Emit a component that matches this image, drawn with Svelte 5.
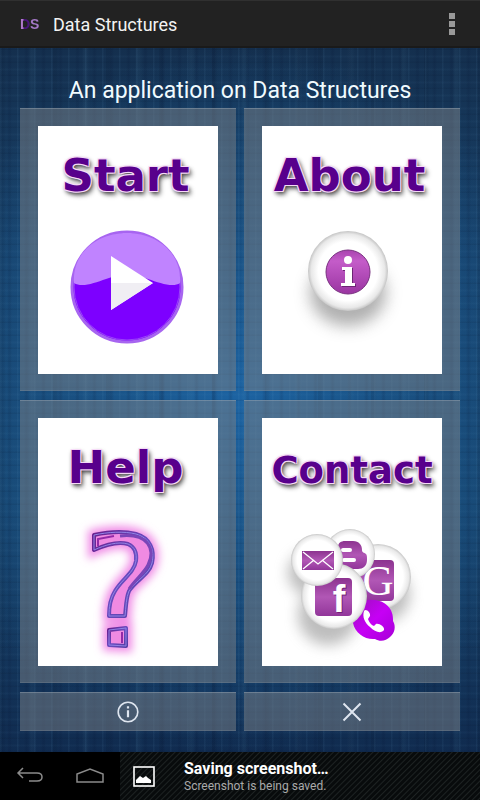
<script>
  const tiles = [
    { id: 'start', label: 'Start' },
    { id: 'about', label: 'About' },
    { id: 'help', label: 'Help' },
    { id: 'contact', label: 'Contact', small: true }
  ];
</script>

<div class="app">
  <header>
    <span class="logo">DS</span>
    <h1>Data Structures</h1>
    <button class="menu" aria-label="More options"><i></i><i></i><i></i></button>
  </header>

  <main>
    <p class="subtitle">An application on Data Structures</p>
    <div class="grid">
      {#each tiles as tile (tile.id)}
        <button class="tile">
          <span class="card">
            <span class="word" class:small={tile.small}>{tile.label}</span>
            {#if tile.id === 'start'}
              <svg class="art" viewBox="0 0 180 148" aria-hidden="true">
                <circle cx="89" cy="61" r="55" fill="#7d00ff" stroke="#a765f0" stroke-width="3" />
                <circle cx="89" cy="61" r="53" fill="none" stroke="#9a45f8" stroke-width="1" />
                <path d="M36 57C34 27 59 7 89 7s55 20 53 50c-7 5-20 0-32-4-14-5-28-5-42 0-12 4-24 9-32 4z" fill="#c083ff" />
                <path d="M73 30l42 27-42 27z" fill="#fff" />
                <path d="M73 57h42L73 84z" fill="#f0eef3" />
              </svg>
            {:else if tile.id === 'about'}
              <svg class="art" viewBox="0 0 180 148" aria-hidden="true">
                <defs>
                  <radialGradient id="a-ball"><stop offset=".74" stop-color="#fff" /><stop offset=".92" stop-color="#e8e8e8" /><stop offset="1" stop-color="#c4c4c4" /></radialGradient>
                  <linearGradient id="a-disc" x2="0" y2="1"><stop stop-color="#a844ae" /><stop offset=".25" stop-color="#c45cc9" /><stop offset="1" stop-color="#9a35a1" /></linearGradient>
                  <filter id="a-blur" x="-50%" y="-50%" width="200%" height="200%"><feGaussianBlur stdDeviation="8" /></filter>
                </defs>
                <ellipse cx="86" cy="67" rx="38" ry="33" fill="#8e8e8e" opacity=".7" filter="url(#a-blur)" />
                <circle cx="86" cy="45" r="40" fill="url(#a-ball)" />
                <circle cx="86" cy="46" r="22" fill="url(#a-disc)" stroke="#793080" />
                <path d="M80 41h10v16h3v3H79v-3h4V44h-3z" transform="translate(1 1)" fill="#6c2473" />
                <circle cx="86" cy="34" r="4" fill="#fff" />
                <path d="M80 41h10v16h3v3H79v-3h4V44h-3z" fill="#fff" />
              </svg>
            {:else if tile.id === 'help'}
              <svg class="art" viewBox="0 0 180 148" aria-hidden="true">
                <defs>
                  <filter id="h-blur" x="-40%" y="-40%" width="180%" height="180%"><feGaussianBlur stdDeviation="4" /></filter>
                  <linearGradient id="h-edge" x2="1" y2="1"><stop stop-color="#68208e" /><stop offset=".5" stop-color="#6a4cc0" /><stop offset="1" stop-color="#563da4" /></linearGradient>
                  <path id="h-mark" d="M56 17c14-3 30-4 42-1 14 4 19 16 16 29-3 12-16 17-23 28-3 7-3 16-4 25H71c0-9 1-17 6-25 7-12 19-18 21-30 1-8-1-14-8-17-10-3-23 1-34 6z" />
                  <path id="h-dot" d="M71 112l17-2v18l-17-1z" />
                </defs>
                <g filter="url(#h-blur)" fill="#f39bea" stroke="#f08ce6" stroke-width="12">
                  <use href="#h-mark" /><use href="#h-dot" />
                </g>
                <g fill="#f08ae2" stroke="url(#h-edge)" stroke-width="4" stroke-linejoin="round">
                  <use href="#h-mark" /><use href="#h-dot" />
                </g>
                <g fill="none" stroke="#9184e6" stroke-width="1" stroke-linejoin="round">
                  <use href="#h-mark" /><use href="#h-dot" />
                </g>
                <path d="M82 18c28-3 36 13 28 29-4 8-13 15-19 24" fill="none" stroke="#7a45b8" stroke-width="3" />
                <path d="M60 28v-7l16-3M84 114v11" fill="none" stroke="#932aa8" stroke-width="2" />
              </svg>
            {:else}
              <svg class="art" viewBox="0 0 180 148" aria-hidden="true">
                <defs>
                  <radialGradient id="c-ball"><stop offset=".76" stop-color="#fff" /><stop offset=".93" stop-color="#e9e9e9" /><stop offset="1" stop-color="#c6c6c6" /></radialGradient>
                  <linearGradient id="c-fill" x2="0" y2="1"><stop stop-color="#8c338f" /><stop offset=".5" stop-color="#b157b5" /><stop offset="1" stop-color="#92369a" /></linearGradient>
                  <linearGradient id="c-phone" x2="1" y2="1"><stop stop-color="#9b10bb" /><stop offset=".5" stop-color="#c600f5" /><stop offset="1" stop-color="#a600d6" /></linearGradient>
                  <filter id="c-blur" x="-50%" y="-50%" width="200%" height="200%"><feGaussianBlur stdDeviation="7" /></filter>
                </defs>
                <g fill="#888" opacity=".55" filter="url(#c-blur)">
                  <circle cx="66" cy="97" r="30" /><circle cx="119" cy="76" r="29" /><circle cx="48" cy="55" r="22" />
                </g>
                <circle cx="116" cy="59" r="33" fill="url(#c-ball)" />
                <rect x="94" y="42" width="38" height="41" rx="4" fill="url(#c-fill)" />
                <text x="116" y="77" class="glyph google" fill="#fff">G</text>
                <circle cx="88" cy="36" r="25" fill="url(#c-ball)" />
                <path d="M76 29c0-4 3-6 7-6h8c6 0 9 4 9 9 0 3 2 2 4 4 1 1 1 3 1 6 0 6-4 9-9 9H82c-4 0-6-2-6-6z" fill="url(#c-fill)" />
                <path d="M81 32h7M82 42h10" stroke="#fff" stroke-width="4" stroke-linecap="round" />
                <path d="M97 87c3-4 8-6 14-5 12 0 21 9 20 21 3 5 2 12-3 16-4 4-10 5-15 2-10 1-20-6-22-16-1-7 1-14 6-18z" fill="url(#c-phone)" />
                <path d="M102 93c-2 6 1 12 6 16 5 5 11 7 14 3 1-3-5-7-8-6l-2 2c-3-1-5-4-6-7l2-3c1-3-4-8-6-5z" fill="#fff" />
                <circle cx="72" cy="78" r="33" fill="url(#c-ball)" />
                <rect x="53" y="60" width="37" height="38" rx="4" fill="url(#c-fill)" />
                <text x="78" y="95" class="glyph face" fill="#712276">f</text>
                <text x="77" y="94" class="glyph face" fill="#fff">f</text>
                <circle cx="55" cy="42" r="26" fill="url(#c-ball)" />
                <rect x="40" y="33" width="32" height="19" fill="url(#c-fill)" />
                <path d="M41 34l15 12 15-12M41 51l11-9M71 51l-11-9" fill="none" stroke="#fff" stroke-width="1.3" />
              </svg>
            {/if}
          </span>
        </button>
      {/each}
      <button class="tool" aria-label="Information">
        <svg width="24" height="24" viewBox="0 0 24 24" fill="none" stroke="#dfe6f0" stroke-width="1.6" aria-hidden="true">
          <circle cx="12" cy="12" r="9.8" /><path d="M12 10.3v7M12 6.3v2.2" stroke-width="2.2" />
        </svg>
      </button>
      <button class="tool" aria-label="Close">
        <svg width="24" height="24" viewBox="0 0 24 24" fill="none" stroke="#dfe6f0" stroke-width="2" aria-hidden="true">
          <path d="M3.5 3.5l17 17M20.5 3.5l-17 17" />
        </svg>
      </button>
    </div>
  </main>

  <footer>
    <button class="nav" aria-label="Back">
      <svg width="30" height="24" viewBox="0 0 30 24" fill="none" stroke="#8b8b8b" stroke-width="1.5" aria-hidden="true">
        <path d="M8 4L3 9l5 5M3 9h19c3 0 5 1.500 5 4s-2 4-5 4h-8" />
      </svg>
    </button>
    <button class="nav" aria-label="Home">
      <svg width="30" height="24" viewBox="0 0 30 24" fill="none" stroke="#8b8b8b" stroke-width="1.5" aria-hidden="true">
        <path d="M2 18v-8l13-5 13 5v8z" />
      </svg>
    </button>
    <div class="note" role="status">
      <svg width="22" height="22" viewBox="0 0 22 22" aria-hidden="true">
        <rect x="1" y="1" width="20" height="19" fill="none" stroke="#fff" stroke-width="1.6" />
        <path d="M3 17v-3l4-4 3 2 3-2 2 2 3 2v3z" fill="#fff" />
      </svg>
      <div>
        <strong>Saving screenshot…</strong>
        <p>Screenshot is being saved.</p>
      </div>
    </div>
  </footer>
</div>

<style>
  :global(body) { background: #000; }
  .app {
    display: flex;
    flex-direction: column;
    min-height: 100vh;
    font-family: Roboto, "Open Sans", sans-serif;
    color: #f3f3f3;
  }
  h1, p { margin: 0; font-weight: 400; }
  button { border: 0; padding: 0; font: inherit; color: inherit; cursor: pointer; }
  svg { display: block; flex: none; }

  header {
    display: flex;
    align-items: center;
    box-sizing: border-box;
    height: 48px;
    padding: 0 20px;
    background: #222;
    border-top: 1px solid #303030;
    border-bottom: 2px solid #1a1a1a;
  }
  .logo {
    width: 33px;
    font: bold 14px/20px "Liberation Sans", sans-serif;
    color: transparent;
    background: linear-gradient(90deg, #b07acb 0 3px, #4a147c 4px 9px, #a679c8 11px);
    -webkit-background-clip: text;
    background-clip: text;
  }
  h1 { flex: 1; font-size: 18px; line-height: 26px; padding-top: 2px; }
  .menu {
    display: flex;
    flex-direction: column;
    align-items: center;
    gap: 2px;
    width: 16px;
    background: none;
  }
  .menu i { width: 6px; height: 6px; background: #999; }

  main {
    flex: 1;
    padding: 0 20px 21px;
    background:
      repeating-linear-gradient(90deg, rgba(110, 170, 210, .07) 0 1px, transparent 2px 7px, rgba(0, 10, 40, .1) 9px 10px, transparent 12px 17px),
      repeating-linear-gradient(90deg, rgba(0, 10, 30, .1) 0 3px, transparent 6px 29px, rgba(110, 170, 200, .06) 31px 33px, transparent 37px 53px),
      repeating-linear-gradient(0deg, rgba(0, 10, 30, .08) 0 1px, transparent 2px 5px, rgba(110, 170, 210, .04) 6px 7px, transparent 8px 13px),
      radial-gradient(ellipse 70% 50% at 50% 50%, #1c63a2 0%, rgba(26, 86, 140, .7) 45%, rgba(20, 60, 100, 0) 100%),
      linear-gradient(#142f4e, #18436c 30%, #18466f 65%, #102b4f);
  }
  .subtitle {
    padding: 29px 0 3px;
    font-size: 23px;
    line-height: 28px;
    text-align: center;
    color: #f0fbff;
  }
  .grid { display: grid; grid-template-columns: 1fr 1fr; gap: 9px 8px; }
  .tile, .tool {
    background: rgba(124, 130, 136, .5);
    box-shadow: inset 0 1px rgba(190, 200, 210, .3), inset 0 -1px rgba(160, 170, 180, .2);
  }
  .tile { padding: 18px 18px 17px; }
  .card { display: block; background: #fff; }
  .word {
    display: block;
    height: 100px;
    padding-right: 5px;
    font: bold 45px/100px "DejaVu Sans", Verdana, sans-serif;
    color: #58008c;
    text-align: center;
    white-space: nowrap;
    text-shadow: -1px -1px #f6d9f8, 1px -1px #f6d9f8, -1px 1px #f6d9f8, 1px 1px #f6d9f8, 1px 2px 4px rgba(0, 0, 0, .7), 3px 4px 5px rgba(0, 0, 0, .4);
  }
  .small { padding-right: 0; font-size: 37px; line-height: 105px; }
  .art { width: 100%; height: auto; }
  .glyph { text-anchor: middle; }
  .google { font: 43px "Liberation Serif", serif; }
  .face { font: bold 38px "Liberation Sans", sans-serif; }
  .tool { display: flex; align-items: center; justify-content: center; height: 39px; }

  footer { display: flex; height: 48px; background: #000; }
  .nav { display: flex; align-items: center; justify-content: center; width: 60px; background: #000; }
  .note {
    flex: 1;
    display: flex;
    align-items: center;
    gap: 29px;
    padding: 2px 0 0 13px;
    background: repeating-linear-gradient(135deg, #080b0c 0 2px, #1d2222 3px, #080b0c 4px);
  }
  strong { display: block; font-size: 16px; line-height: 18px; color: #fff; }
  .note p { font-size: 12px; line-height: 16px; color: #aaa; }
</style>
